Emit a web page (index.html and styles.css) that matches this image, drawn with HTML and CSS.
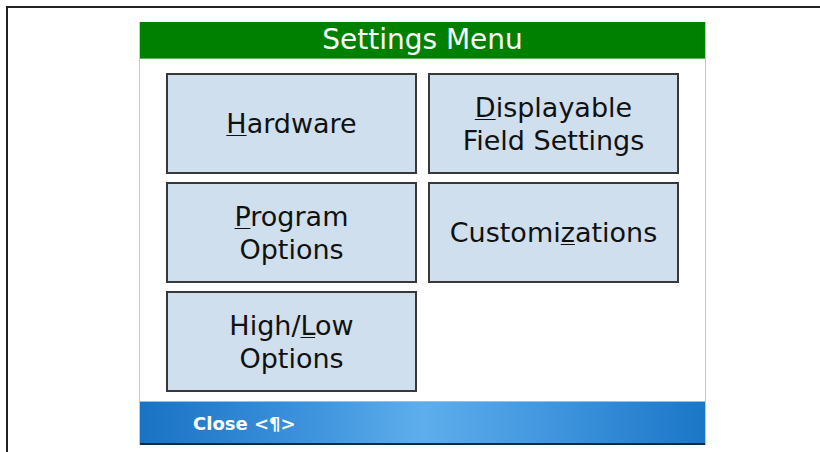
FILE: index.html
```html
<!DOCTYPE html>
<html>
<head>
    <title>Settings Menu</title>
    <link rel="stylesheet" href="styles.css">
</head>
<body>
    <div class="frame">
        <div class="screen">
            <div class="title-bar">Settings Menu</div>
            <div class="menu">
                <button class="menu-btn" type="button"><u>H</u>ardware</button>
                <button class="menu-btn" type="button"><u>D</u>isplayable<br>Field Settings</button>
                <button class="menu-btn" type="button"><u>P</u>rogram<br>Options</button>
                <button class="menu-btn" type="button">Customi<u>z</u>ations</button>
                <button class="menu-btn" type="button">High/<u>L</u>ow<br>Options</button>
            </div>
            <div class="soft-bar">
                <span class="soft-key">Close &lt;&para;&gt;</span>
            </div>
        </div>
    </div>
</body>
</html>
```

FILE: styles.css
```css
body {
    margin: 0;
    padding: 0;
    background: #fff;
    font-family: 'DejaVu Sans', Verdana, sans-serif;
    overflow: hidden;
}
.frame {
    margin: 6px 0 0 6px;
    border-left: 2px solid #222;
    border-top: 2px solid #222;
    height: 430px;
    padding: 14px 0 0 131px;
}
.screen {
    width: 565px;
    border-left: 1px solid #c8c8c8;
    border-right: 1px solid #c8c8c8;
    background: #fff;
}
.title-bar {
    height: 36px;
    line-height: 36px;
    background: #008000;
    border-bottom: 1px solid #5bb35b;
    color: #fff;
    font-size: 28px;
    text-align: center;
}
.menu {
    display: grid;
    grid-template-columns: 251px 251px;
    grid-auto-rows: 101px;
    column-gap: 11px;
    row-gap: 8px;
    padding: 14px 0 9px 26px;
}
.menu-btn {
    margin: 0;
    padding: 0;
    background: #cfdfee;
    border: 2px solid #383838;
    color: #111;
    font-family: 'DejaVu Sans', Verdana, sans-serif;
    font-size: 27px;
    line-height: 33px;
    text-align: center;
}
.menu-btn u {
    text-decoration-thickness: 1px;
    text-underline-offset: 2px;
}
.soft-bar {
    height: 44px;
    display: flex;
    align-items: center;
    padding: 2px 0 0 53px;
    box-sizing: border-box;
    background: linear-gradient(to right, #1a72c4 0%, #3d93dc 30%, #5eaeec 50%, #3d93dc 75%, #1b76c7 100%);
    border-top: 1px solid #8cc4ef;
    border-bottom: 2px solid #1b2633;
}
.soft-key {
    color: #fff;
    font-weight: bold;
    font-size: 18px;
}
```
